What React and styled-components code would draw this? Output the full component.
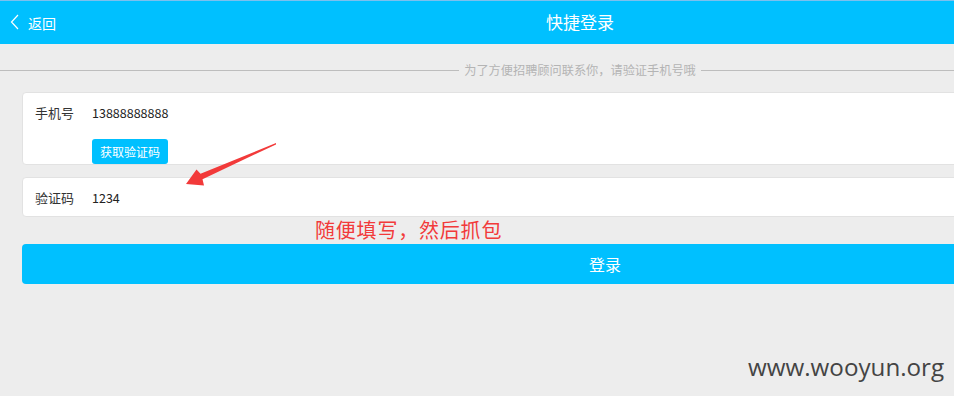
import React from "react";
import styled, { createGlobalStyle } from "styled-components";

const GlobalStyle = createGlobalStyle`
  html, body {
    margin: 0;
    padding: 0;
    background: #ededed;
    overflow: hidden;
  }
  body {
    font-family: "Noto Sans CJK SC", "Noto Sans", sans-serif;
  }
`;

const App = () => {
  return (
    <>
      <GlobalStyle />
      <Page>
        <Header>
          <Back>
            <svg width="10" height="16" viewBox="0 0 10 16">
              <path d="M8 1 L1.5 8 L8 15" fill="none" stroke="#fff" strokeWidth="1.2" />
            </svg>
            <span>返回</span>
          </Back>
          <Title>快捷登录</Title>
        </Header>
        <Divider>
          <span>为了方便招聘顾问联系你，请验证手机号哦</span>
        </Divider>
        <Form>
          <Card $tall>
            <Row>
              <Label>手机号</Label>
              <Value>13888888888</Value>
            </Row>
            <CodeButton>获取验证码</CodeButton>
          </Card>
          <Card>
            <Row>
              <Label>验证码</Label>
              <Value>1234</Value>
            </Row>
            <Arrow width="110" height="52" viewBox="0 0 110 52">
              <path
                d="M100 6 L24.5 36.8 L20.5 32.5 L10 47 L28 48.5 L26.5 42.2 L100 7.4 Z"
                fill="#f23a3a"
              />
            </Arrow>
          </Card>
          <Note>随便填写，然后抓包</Note>
          <LoginButton>登录</LoginButton>
        </Form>
        <Watermark>www.wooyun.org</Watermark>
      </Page>
    </>
  );
};

export default App;

const Page = styled.div`
  width: 1160px;
  height: 396px;
  border-top: 1px solid #7cc0ee;
  box-sizing: border-box;
  position: relative;
`;

const Header = styled.div`
  height: 43px;
  background: #00c0ff;
  display: flex;
  align-items: center;
  justify-content: center;
  position: relative;
`;

const Back = styled.div`
  position: absolute;
  left: 10px;
  top: 0;
  height: 43px;
  display: flex;
  align-items: center;
  gap: 8px;
  color: #fff;
  font-size: 14px;
  svg {
    margin-top: -2px;
  }
`;

const Title = styled.div`
  color: #fff;
  font-size: 17px;
  margin-top: -2px;
`;

const Divider = styled.div`
  display: flex;
  align-items: center;
  gap: 5px;
  height: 16px;
  margin-top: 18px;
  color: #b4b4b4;
  font-size: 12.2px;
  &::before,
  &::after {
    content: "";
    flex: 1;
    height: 1px;
    background: #bdbdbd;
  }
`;

const Form = styled.div`
  padding: 0 0 0 22px;
  display: flex;
  flex-direction: column;
  margin-top: 14px;
`;

const Card = styled.div`
  background: #fff;
  border: 1px solid #e2e2e2;
  border-radius: 4px;
  padding: 2px 12px 0;
  height: ${(p) => (p.$tall ? "73px" : "40px")};
  margin-bottom: ${(p) => (p.$tall ? "12px" : "0")};
  box-sizing: border-box;
  position: relative;
`;

const Row = styled.div`
  display: flex;
  align-items: center;
  height: 34px;
`;

const Label = styled.div`
  width: 57px;
  font-size: 13px;
  color: #333;
`;

const Value = styled.div`
  font-size: 12.5px;
  color: #222;
`;

const CodeButton = styled.div`
  display: inline-flex;
  align-items: center;
  justify-content: center;
  margin-left: 57px;
  margin-top: 10px;
  width: 76px;
  height: 25px;
  border-radius: 3px;
  background: #00c0ff;
  color: #fff;
  font-size: 12px;
`;

const Arrow = styled.svg`
  position: absolute;
  left: 153px;
  top: -41px;
`;

const Note = styled.div`
  height: 27px;
  padding-left: 293px;
  color: #f23a3a;
  font-size: 20px;
  letter-spacing: 0.8px;
  line-height: 26px;
`;

const LoginButton = styled.div`
  height: 40px;
  border-radius: 4px;
  background: #00c0ff;
  color: #fff;
  font-size: 16px;
  display: flex;
  align-items: center;
  justify-content: center;
  padding-left: 28px;
`;

const Watermark = styled.div`
  position: absolute;
  left: 748px;
  top: 349px;
  font-family: "Open Sans", sans-serif;
  font-size: 24.2px;
  color: #444;
`;
